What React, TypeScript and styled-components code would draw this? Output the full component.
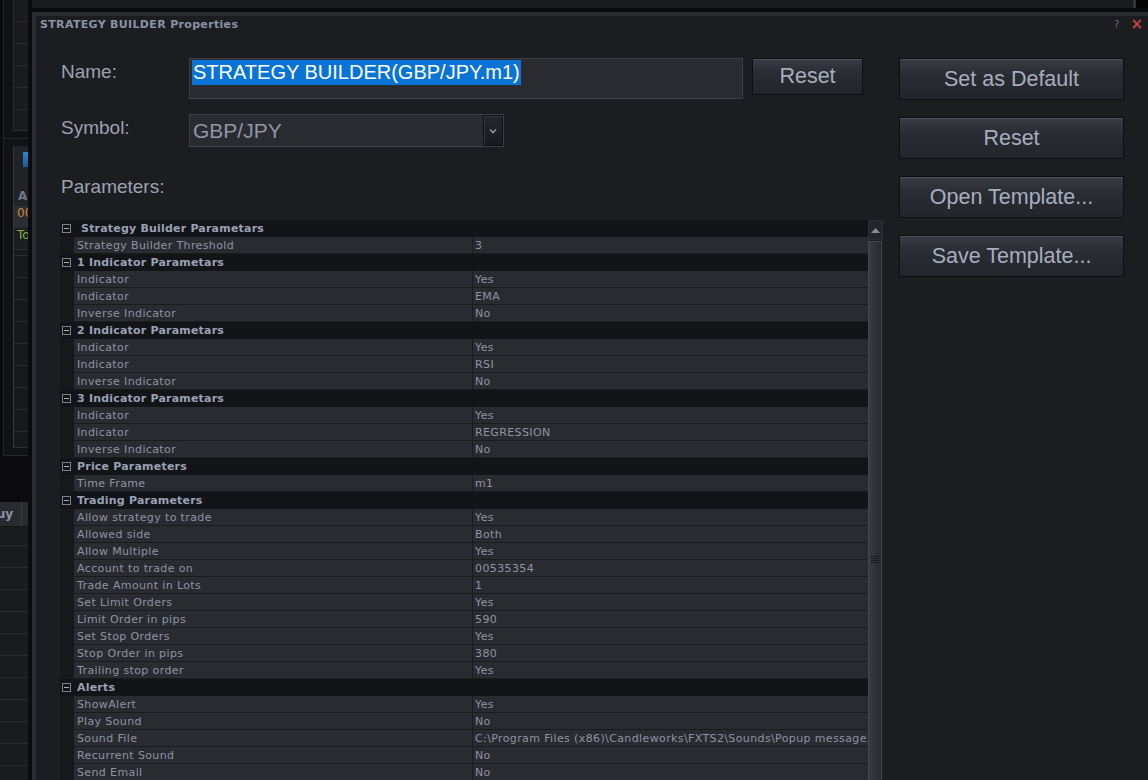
import React from "react";
import styled, { createGlobalStyle } from "styled-components";

type Param = { group: string } | { name: string; value: string };

const params: Param[] = [
  { group: " Strategy Builder Parametars" },
  { name: "Strategy Builder Threshold", value: "3" },
  { group: "1 Indicator Parametars" },
  { name: "Indicator", value: "Yes" },
  { name: "Indicator", value: "EMA" },
  { name: "Inverse Indicator", value: "No" },
  { group: "2 Indicator Parametars" },
  { name: "Indicator", value: "Yes" },
  { name: "Indicator", value: "RSI" },
  { name: "Inverse Indicator", value: "No" },
  { group: "3 Indicator Parametars" },
  { name: "Indicator", value: "Yes" },
  { name: "Indicator", value: "REGRESSION" },
  { name: "Inverse Indicator", value: "No" },
  { group: "Price Parameters" },
  { name: "Time Frame", value: "m1" },
  { group: "Trading Parameters" },
  { name: "Allow strategy to trade", value: "Yes" },
  { name: "Allowed side", value: "Both" },
  { name: "Allow Multiple", value: "Yes" },
  { name: "Account to trade on", value: "00535354" },
  { name: "Trade Amount in Lots", value: "1" },
  { name: "Set Limit Orders", value: "Yes" },
  { name: "Limit Order in pips", value: "590" },
  { name: "Set Stop Orders", value: "Yes" },
  { name: "Stop Order in pips", value: "380" },
  { name: "Trailing stop order", value: "Yes" },
  { group: "Alerts" },
  { name: "ShowAlert", value: "Yes" },
  { name: "Play Sound", value: "No" },
  {
    name: "Sound File",
    value: "C:\\Program Files (x86)\\Candleworks\\FXTS2\\Sounds\\Popup message.wav",
  },
  { name: "Recurrent Sound", value: "No" },
  { name: "Send Email", value: "No" },
  { name: "Email Address", value: "" },
];

const sideButtons = ["Set as Default", "Reset", "Open Template...", "Save Template..."];

const GlobalStyle = createGlobalStyle`
  html, body {
    margin: 0;
    padding: 0;
    background: #0b0b0d;
    overflow: hidden;
  }
`;

const Screen = styled.div`
  display: flex;
  width: 1148px;
  height: 780px;
  overflow: hidden;
  font-family: "Liberation Sans", Arial, sans-serif;
`;

/* background app behind the dialog */
const BackStrip = styled.div`
  width: 28px;
  margin-right: 4px;
  flex-shrink: 0;
  display: flex;
  flex-direction: column;
  overflow: hidden;
`;

const OuterFrame = styled.div<{ $h: number }>`
  height: ${(p) => p.$h}px;
  margin-left: 3px;
  padding-left: 9px;
  border-left: 1px solid #25262a;
  border-bottom: 1px solid #25262a;
  background: #111215;
  box-sizing: border-box;
`;

const LinedBox = styled.div<{ $h: number }>`
  height: ${(p) => p.$h}px;
  border-left: 1px solid #2d2e33;
  border-bottom: 1px solid #2d2e33;
  box-sizing: border-box;
  background: repeating-linear-gradient(to bottom, #1a1b1e 0 21px, #2a2b2f 21px 22px);
`;

const BlotterBox = styled.div`
  height: 302px;
  margin-top: 7px;
  display: flex;
  flex-direction: column;
  border-left: 1px solid #35363b;
  border-bottom: 1px solid #2d2e33;
  box-sizing: border-box;
  background: repeating-linear-gradient(to bottom, #18191c 0 21px, #2a2b2f 21px 22px);
  overflow: hidden;
`;

const BlotterHead = styled.div`
  height: 60px;
  padding: 6px 0 0 9px;
  box-sizing: border-box;
  background: #222328;
  display: flex;
  flex-direction: column;
  flex-shrink: 0;
`;

const BlueTab = styled.div`
  width: 8px;
  height: 15px;
  background: linear-gradient(#2a87cf, #175c95);
`;

const HeadLetter = styled.div`
  margin: 22px 0 0 -5px;
  font: bold 12px "DejaVu Sans", sans-serif;
  color: #6f7689;
`;

const BlotterRow = styled.div<{ $color: string; $bg: string }>`
  height: 22px;
  line-height: 22px;
  padding-left: 3px;
  font: 12px "DejaVu Sans", sans-serif;
  color: ${(p) => p.$color};
  background: ${(p) => p.$bg};
  border-bottom: 1px solid #2a2b2f;
  box-sizing: border-box;
  white-space: nowrap;
  flex-shrink: 0;
`;

const OrdersPanel = styled.div`
  margin-top: 46px;
  flex: 1;
  display: flex;
  flex-direction: column;
  background: repeating-linear-gradient(to bottom, #1a1b1e 0 21px, #2a2b2f 21px 22px);
`;

const OrdersHead = styled.div`
  height: 25px;
  display: flex;
  background: #2a2b30;
  border-bottom: 1px solid #111;
  box-sizing: border-box;
`;

const OrdersCell = styled.div`
  width: 22px;
  display: flex;
  justify-content: flex-end;
  align-items: center;
  padding-right: 8px;
  box-sizing: border-box;
  border-right: 1px solid #3b3c42;
  overflow: hidden;
  font: bold 12px "DejaVu Sans", sans-serif;
  color: #8e95a8;
`;

const MainColumn = styled.div`
  flex: 1;
  display: flex;
  flex-direction: column;
  min-width: 0;
`;

const TopStrip = styled.div`
  height: 8px;
  display: flex;
  background: #1a1b1f;
  border-bottom: 4px solid #0a0a0b;
`;

const TopStripEnd = styled.div`
  margin-left: auto;
  width: 12px;
  border-left: 3px solid #34353a;
  background: #050506;
`;

/* dialog */
const Dialog = styled.div`
  flex: 1;
  min-height: 0;
  display: flex;
  flex-direction: column;
  background: #1c1d21;
  border-top: 4px solid #2b2d32;
  border-left: 4px solid #2b2d32;
  overflow: hidden;
`;

const TitleBar = styled.div`
  height: 16px;
  display: flex;
  align-items: center;
  padding: 0 5px 0 4px;
  flex-shrink: 0;
`;

const Title = styled.div`
  font: bold 11px "DejaVu Sans", sans-serif;
  letter-spacing: 0.33px;
  color: #8a92a6;
  white-space: nowrap;
`;

const TitleIcons = styled.div`
  margin-left: auto;
  display: flex;
  align-items: center;
  gap: 11px;
`;

const HelpIcon = styled.span`
  font: 10px "DejaVu Sans", sans-serif;
  color: #6a6f7c;
`;

const CloseIcon = styled.span`
  font: bold 15px "DejaVu Sans", sans-serif;
  color: #c8403e;
  line-height: 1;
`;

const Body = styled.div`
  flex: 1;
  min-height: 0;
  display: flex;
  gap: 16px;
  padding: 26px 0 0 24px;
  overflow: hidden;
`;

const LeftCol = styled.div`
  width: 823px;
  flex-shrink: 0;
  display: flex;
  flex-direction: column;
`;

const FieldRow = styled.div<{ $mt: number }>`
  display: flex;
  align-items: flex-start;
  margin-top: ${(p) => p.$mt}px;
`;

const Label = styled.div`
  width: 128px;
  padding: 3px 0 0 1px;
  line-height: 22px;
  font-size: 19px;
  color: #9ca1b2;
  flex-shrink: 0;
`;

const NameInput = styled.div`
  width: 554px;
  height: 41px;
  padding: 1px 2px;
  box-sizing: border-box;
  background: #2a2b30;
  border: 1px solid #3d3e44;
`;

const Selected = styled.span`
  display: inline-block;
  background: #0a74d6;
  color: #ffffff;
  font-size: 20px;
  line-height: 25px;
  padding: 0 1px;
  white-space: nowrap;
`;

const DarkButton = styled.div<{ $w: number; $h: number }>`
  width: ${(p) => p.$w}px;
  height: ${(p) => p.$h}px;
  box-sizing: border-box;
  display: flex;
  align-items: center;
  justify-content: center;
  border: 1px solid #0d0e11;
  box-shadow: inset 0 1px 0 #4d505a;
  background: linear-gradient(#3a3c44 0%, #2a2c33 40%, #23252b 100%);
  color: #a7adbf;
  font-size: 21.5px;
  flex-shrink: 0;
`;

const ResetButton = styled(DarkButton)`
  margin-left: 9px;
`;

const SelectBox = styled.div`
  width: 315px;
  height: 33px;
  display: flex;
  box-sizing: border-box;
  background: #2a2b30;
  border: 1px solid #3d3e44;
`;

const SelectText = styled.div`
  flex: 1;
  padding-left: 3px;
  line-height: 31px;
  font-size: 21px;
  color: #8f95a7;
`;

const SelectArrow = styled.div`
  width: 18px;
  display: flex;
  align-items: center;
  justify-content: center;
  border: 1px solid #0e0f12;
  box-shadow: inset 1px 1px 0 #34363c;
  background: linear-gradient(#26272c, #18191d);
`;

const SectionLabel = styled(Label)`
  margin-top: 29px;
  padding-top: 0;
`;

const Grid = styled.div`
  margin-top: 22px;
  flex: 1;
  min-height: 0;
  display: flex;
  overflow: hidden;
`;

const Rows = styled.div`
  width: 808px;
  display: flex;
  flex-direction: column;
  font: 11px "DejaVu Sans", sans-serif;
  letter-spacing: 0.38px;
`;

const GroupRow = styled.div`
  height: 17px;
  flex-shrink: 0;
  display: flex;
  align-items: center;
  background: #131418;
  font-weight: bold;
  letter-spacing: 0.2px;
  color: #9aa1b5;
  white-space: pre;
`;

const Toggle = styled.svg`
  margin: 0 6px 0 2px;
  flex-shrink: 0;
`;

const DataRow = styled.div`
  height: 17px;
  flex-shrink: 0;
  display: flex;
  background: #17181c;
`;

const Cell = styled.div<{ $w?: number; $pl: number }>`
  ${(p) => (p.$w ? `width: ${p.$w}px; flex-shrink: 0;` : "flex: 1; min-width: 0;")}
  margin-left: ${(p) => (p.$w ? 14 : 0)}px;
  padding: 1px 0 0 ${(p) => p.$pl}px;
  box-sizing: border-box;
  line-height: 16px;
  background: #2a2b30;
  border-bottom: 1px solid #1a1b1f;
  border-right: ${(p) => (p.$w ? "1px solid #1a1b1f" : "none")};
  color: #8d93a4;
  white-space: nowrap;
  overflow: hidden;
`;

const Scrollbar = styled.div`
  width: 15px;
  flex-shrink: 0;
  display: flex;
  flex-direction: column;
  background: #1e1f23;
`;

const ScrollUp = styled.div`
  height: 20px;
  flex-shrink: 0;
  display: flex;
  align-items: center;
  justify-content: center;
  background: #25262b;
  border: 1px solid #2f3036;
  box-sizing: border-box;
`;

const Thumb = styled.div`
  height: 638px;
  flex-shrink: 0;
  margin: 1px 1px 0 0;
  display: flex;
  align-items: center;
  justify-content: center;
  border: 1px solid #45474e;
  box-sizing: border-box;
  background: linear-gradient(to right, #3a3c43, #2f3137 50%, #292a30);
`;

const RightCol = styled.div`
  width: 225px;
  flex-shrink: 0;
  display: flex;
  flex-direction: column;
  gap: 17px;
`;

const ToggleIcon = () => (
  <Toggle width="9" height="9" viewBox="0 0 9 9">
    <rect x="0.5" y="0.5" width="8" height="8" fill="none" stroke="#7c8190" />
    <line x1="2" y1="4.5" x2="7" y2="4.5" stroke="#a8adba" />
  </Toggle>
);

const App: React.FC = () => {
  const rows = params.map((p, i) =>
    "group" in p ? (
      <GroupRow key={i}>
        <ToggleIcon />
        {p.group}
      </GroupRow>
    ) : (
      <DataRow key={i}>
        <Cell $w={399} $pl={3}>
          {p.name}
        </Cell>
        <Cell $pl={2}>{p.value}</Cell>
      </DataRow>
    )
  );

  return (
    <Screen>
      <GlobalStyle />
      <BackStrip>
        <OuterFrame $h={139}>
          <LinedBox $h={131} />
        </OuterFrame>
        <OuterFrame $h={317}>
          <BlotterBox>
            <BlotterHead>
              <BlueTab />
              <HeadLetter>A</HeadLetter>
            </BlotterHead>
            <BlotterRow $color="#d0893b" $bg="#2d2e33">
              00
            </BlotterRow>
            <BlotterRow $color="#7fb24c" $bg="#1c1d20">
              To
            </BlotterRow>
          </BlotterBox>
        </OuterFrame>
        <OrdersPanel>
          <OrdersHead>
            <OrdersCell>Buy</OrdersCell>
          </OrdersHead>
        </OrdersPanel>
      </BackStrip>

      <MainColumn>
        <TopStrip>
          <TopStripEnd />
        </TopStrip>
        <Dialog>
          <TitleBar>
            <Title>STRATEGY BUILDER Properties</Title>
            <TitleIcons>
              <HelpIcon>?</HelpIcon>
              <CloseIcon>×</CloseIcon>
            </TitleIcons>
          </TitleBar>
          <Body>
            <LeftCol>
              <FieldRow $mt={0}>
                <Label>Name:</Label>
                <NameInput>
                  <Selected>STRATEGY BUILDER(GBP/JPY.m1)</Selected>
                </NameInput>
                <ResetButton $w={111} $h={37}>
                  Reset
                </ResetButton>
              </FieldRow>
              <FieldRow $mt={15}>
                <Label>Symbol:</Label>
                <SelectBox>
                  <SelectText>GBP/JPY</SelectText>
                  <SelectArrow>
                    <svg width="8" height="6" viewBox="0 0 8 6">
                      <path d="M1 1.5 L4 4.5 L7 1.5" fill="none" stroke="#8b90a0" strokeWidth="1.6" />
                    </svg>
                  </SelectArrow>
                </SelectBox>
              </FieldRow>
              <SectionLabel>Parameters:</SectionLabel>
              <Grid>
                <Rows>{rows}</Rows>
                <Scrollbar>
                  <ScrollUp>
                    <svg width="9" height="5" viewBox="0 0 9 5">
                      <path d="M0 5 L4.5 0 L9 5 Z" fill="#878c98" />
                    </svg>
                  </ScrollUp>
                  <Thumb>
                    <svg width="8" height="8" viewBox="0 0 8 8">
                      <path d="M0 0.5H8M0 2.5H8M0 4.5H8M0 6.5H8" stroke="#1c1d21" />
                    </svg>
                  </Thumb>
                </Scrollbar>
              </Grid>
            </LeftCol>
            <RightCol>
              {sideButtons.map((b) => (
                <DarkButton key={b} $w={225} $h={42}>
                  {b}
                </DarkButton>
              ))}
            </RightCol>
          </Body>
        </Dialog>
      </MainColumn>
    </Screen>
  );
};

export default App;
